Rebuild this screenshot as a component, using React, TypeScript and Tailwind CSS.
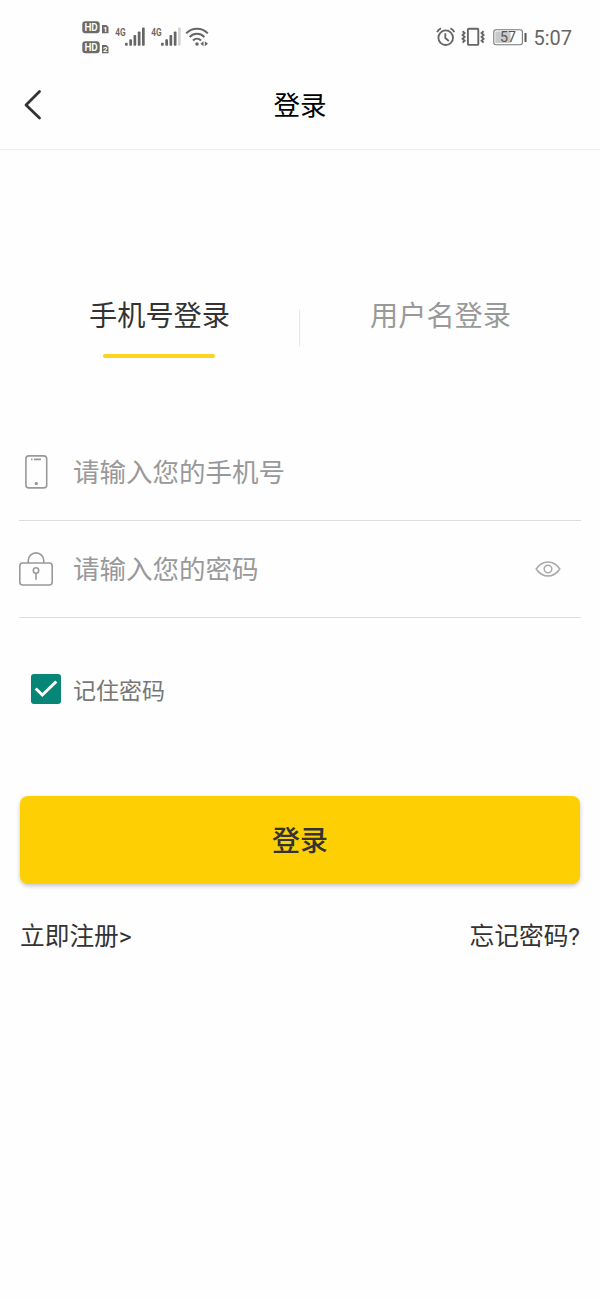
import { useState } from "react";

function HdBadge({ sim }: { sim: string }) {
  return (
    <svg width="28" height="13" viewBox="0 0 28 13" fontFamily="Roboto, sans-serif" fontWeight="700">
      <rect x="0.3" y="0.3" width="17.4" height="12" rx="3" fill="#6a6a6a" />
      <text x="2.4" y="10" fontSize="10.8" fontWeight="600" textLength="13.4" lengthAdjust="spacingAndGlyphs" fill="#fff">HD</text>
      <path d="M20 3.9H24.3L26.5 6.1V12.3H20Z" fill="#6a6a6a" />
      <text x="21.1" y="11.2" fontSize="8" fill="#fff">{sim}</text>
    </svg>
  );
}

const bars = [
  { x: 10, h: 3 },
  { x: 14.3, h: 6.6 },
  { x: 18.5, h: 10.8 },
  { x: 22.8, h: 14.4 },
  { x: 27, h: 18.2 },
];

function Signal({ level }: { level: number }) {
  return (
    <svg width="31" height="26" viewBox="0 -6 31 26">
      <text x="0.2" y="8.6" fontSize="11.8" fontWeight="600" fontFamily="Roboto, sans-serif" textLength="10.4" lengthAdjust="spacingAndGlyphs" fill="#666">4G</text>
      {bars.map((b, i) => (
        <rect key={b.x} x={b.x} y={18.8 - b.h} width="2.7" height={b.h} rx="0.8" fill={i < level ? "#666" : "#d4d4d4"} />
      ))}
    </svg>
  );
}

function Wifi() {
  return (
    <svg width="24" height="20" viewBox="0 0 24 20" fill="none" stroke="#666" strokeWidth="2">
      <path d="M1.2 6.4C7.2 .2 16.8 .2 22.8 6.4M4.6 10C8.8 5.8 15.2 5.8 19.4 10M8 13.5C10.3 11.2 13.7 11.2 16 13.5" />
      <circle cx="12" cy="17" r="1.8" fill="#666" stroke="none" />
      <path d="M18.5 14.2V19.2L15.4 16.7ZM19.8 14.2V19.2L23 16.7Z" fill="#666" stroke="none" />
    </svg>
  );
}

function Alarm() {
  return (
    <svg width="20" height="20" viewBox="0 0 20 20" fill="none" stroke="#666" strokeWidth="1.8">
      <circle cx="9.7" cy="10.7" r="7.3" />
      <path d="M9.3 6.2V11L12.8 14M1.1 5.1C1.8 3.3 3.2 2 5 1.3M14.4 1.3C16.2 2 17.6 3.3 18.3 5.1" />
    </svg>
  );
}

function Vibrate() {
  return (
    <svg width="24" height="20" viewBox="0 0 24 20" fill="none" stroke="#666" strokeWidth="1.9">
      <rect x="6.9" y="1.7" width="10.4" height="16.2" rx="1" />
      <path strokeWidth="1.9" d="M1.6 4.2L3.6 6.1L1.6 8L3.6 9.9L1.6 11.8L3.6 13.7L1.6 15.6M22.6 4.2L20.6 6.1L22.6 8L20.6 9.9L22.6 11.8L20.6 13.7L22.6 15.6" />
    </svg>
  );
}

function Battery() {
  return (
    <svg width="34" height="17" viewBox="0 0 34 17">
      <rect x="0.8" y="0.7" width="28.6" height="15" rx="2.2" fill="#fff" stroke="#777" strokeWidth="1.1" />
      <rect x="2.3" y="2.4" width="15.3" height="11.6" fill="#c9c9c9" />
      <text x="7.1" y="13.4" fontSize="14.2" fontFamily="Roboto, sans-serif" fill="#555">57</text>
      <rect x="31.5" y="4" width="2" height="9" rx=".6" fill="#555" />
    </svg>
  );
}

function StatusBar() {
  return (
    <div className="flex h-[60px] items-start pr-[28px] pl-[82px]">
      <div className="flex flex-col gap-[7px] pt-[21px]">
        <HdBadge sim="1" />
        <HdBadge sim="2" />
      </div>
      <div className="ml-[5px] flex gap-[5px] pt-[20.5px]">
        <Signal level={5} />
        <Signal level={4} />
      </div>
      <div className="ml-[3px] pt-[26.5px]"><Wifi /></div>
      <div className="ml-auto flex h-[74px] items-center">
        <Alarm />
        <div className="ml-[5px]"><Vibrate /></div>
        <div className="ml-[8px]"><Battery /></div>
        <span className="ml-[6px] mt-px font-[Roboto,sans-serif] text-[20px] leading-6 text-[#666]">5:07</span>
      </div>
    </div>
  );
}

function PhoneIcon() {
  return (
    <svg width="34" height="34" viewBox="0 0 34 34" fill="none" stroke="#999" strokeWidth="1.6">
      <rect x="6.9" y=".9" width="20.8" height="32" rx="3" />
      <path d="M12 4.4H13.5M15 4.4H22" />
      <circle cx="17.3" cy="28.6" r="1.7" fill="#999" stroke="none" />
    </svg>
  );
}

function LockIcon() {
  return (
    <svg width="34" height="34" viewBox="0 0 34 34" fill="none" stroke="#999" strokeWidth="1.6">
      <rect x=".8" y="11" width="32.4" height="22" rx="3" />
      <path d="M9.2 11V8.7A7.8 7.8 0 0 1 24.8 8.7V11M17 21.2V27.8" />
      <circle cx="17" cy="18.5" r="2.7" />
    </svg>
  );
}

function EyeIcon() {
  return (
    <svg width="26" height="18" viewBox="0 0 26 18" fill="none" stroke="#aaa" strokeWidth="1.5">
      <path d="M1.2 9C3.8 5 7.7 2 13 2S22.2 5 24.8 9C22.2 13 18.3 16 13 16S3.8 13 1.2 9Z" />
      <circle cx="13" cy="9" r="3.8" />
    </svg>
  );
}

const fieldInput =
  "ml-5 h-10 min-w-0 flex-1 bg-transparent text-[26.5px] text-[#333] outline-none placeholder:text-[#999]";

export default function App() {
  const [tab, setTab] = useState(0);
  const [visible, setVisible] = useState(false);
  const [remember, setRemember] = useState(true);
  const tabs = ["手机号登录", "用户名登录"];

  return (
    <div className="min-h-[1300px] w-full bg-[#fefefe] font-['Noto_Sans_CJK_SC',sans-serif] text-[#333]">
      <StatusBar />
      <header className="grid h-[90px] grid-cols-[80px_1fr_80px] items-center border-b border-[#eee]">
        <button aria-label="返回" className="pl-[22px]">
          <svg width="22" height="32" viewBox="0 0 22 32" fill="none" stroke="#333" strokeWidth="2.8" strokeLinecap="round" strokeLinejoin="round">
            <path d="M17.5 2.5L4 16L17.5 29" />
          </svg>
        </button>
        <h1 className="pb-0.5 text-center text-[26.5px] leading-10 text-black">登录</h1>
      </header>

      <nav className="grid grid-cols-2 pt-[140px]">
        {tabs.map((label, i) => (
          <button
            key={label}
            onClick={() => setTab(i)}
            className={`flex h-[67px] items-start justify-center text-[28.2px] leading-[48px] ${i > 0 ? "pr-[19px]" : "pl-[19px]"} ${tab === i ? "text-[#333]" : "text-[#999]"}`}
          >
            <span className="flex flex-col items-center">
              {label}
              <span className={`mt-[15.5px] h-[4px] w-[112px] rounded-full ${tab === i ? "bg-[#fad41e]" : "bg-transparent"}`} />
            </span>
          </button>
        ))}
        <div className="col-span-2 -mt-[47px] mb-[11px] ml-[299px] h-[36px] w-px bg-[#e5e5e5]" />
      </nav>

      <form className="px-5" onSubmit={(e) => e.preventDefault()}>
        <label className="mt-[66px] -mx-px flex h-[98px] items-center border-b border-[#ddd]">
          <PhoneIcon />
          <input className={`${fieldInput} mb-0.5`} placeholder="请输入您的手机号" />
        </label>
        <div className="-mx-px flex h-[97px] items-center border-b border-[#ddd] pr-[20px]">
          <LockIcon />
          <input className={`${fieldInput} mb-[3px]`} type={visible ? "text" : "password"} placeholder="请输入您的密码" />
          <button type="button" aria-label="显示密码" onClick={() => setVisible(!visible)}><EyeIcon /></button>
        </div>

        <button type="button" role="checkbox" aria-checked={remember} onClick={() => setRemember(!remember)} className="mt-[55px] ml-[11px] flex h-[32px] items-center">
          <span className={`flex size-[30px] items-center justify-center rounded-[3px] ${remember ? "bg-[#078576]" : "bg-gray-300"}`}>
            {remember && (
              <svg width="24" height="18" viewBox="0 0 24 18" fill="none" stroke="#fff" strokeWidth="3">
                <path d="M1.7 8.5L8.3 15L22.3 1.5" />
              </svg>
            )}
          </span>
          <span className="ml-3 pb-px text-[23px] leading-8 text-[#777]">记住密码</span>
        </button>

        <button type="submit" className="mt-[91px] flex h-[88px] w-full items-center justify-center rounded-[8px] bg-[#fed004] pb-[3px] text-[28px] font-medium text-[#333] shadow-[0_2px_4px_rgba(0,0,0,0.22)]">
          登录
        </button>
        <div className="mt-[32px] flex justify-between text-[24.7px] leading-9">
          <button type="button">立即注册<span className="font-[Roboto,sans-serif]">&gt;</span></button>
          <button type="button">忘记密码<span className="font-[Roboto,sans-serif]">?</span></button>
        </div>
      </form>
    </div>
  );
}
